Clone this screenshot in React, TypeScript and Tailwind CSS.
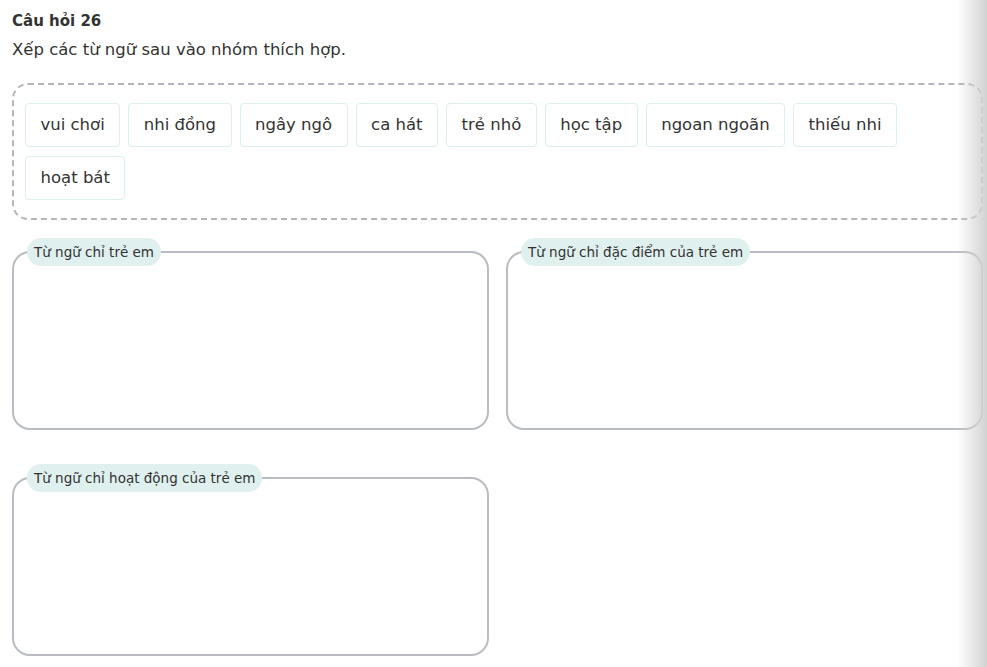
const words = [
  'vui chơi',
  'nhi đồng',
  'ngây ngô',
  'ca hát',
  'trẻ nhỏ',
  'học tập',
  'ngoan ngoãn',
  'thiếu nhi',
  'hoạt bát',
]

const groups = ['Từ ngữ chỉ trẻ em', 'Từ ngữ chỉ đặc điểm của trẻ em', 'Từ ngữ chỉ hoạt động của trẻ em']

function GroupBox({ label }: { label: string }) {
  return (
    <div className="relative pt-[13px]">
      <span className="absolute left-[15px] top-0 rounded-full bg-[#dff0ee] px-[7px] py-[6px] text-[13.5px] leading-[16px] text-[#333]">
        {label}
      </span>
      <div className="h-[179px] rounded-[18px] border-2 border-[#b9bcc1]" />
    </div>
  )
}

export default function App() {
  return (
    <div className="relative h-[667px] overflow-hidden bg-white pl-[12px] pr-[4px] pt-[11px] font-['DejaVu_Sans',sans-serif] text-[#333]">
      <h2 className="text-[15px] font-bold leading-[20px]">Câu hỏi 26</h2>
      <p className="mt-[9px] text-[16.5px] leading-[20px]">Xếp các từ ngữ sau vào nhóm thích hợp.</p>

      <div className="mt-[23px] flex flex-wrap gap-[9px_8px] rounded-[16px] border-2 border-dashed border-[#b4b5ba] px-[11px] pb-[18px] pt-[18px]">
        {words.map((w) => (
          <div
            key={w}
            className="flex h-[44px] items-center rounded-[4px] border border-[#dcefec] px-[14.5px] text-[16.5px] text-[#333]"
          >
            {w}
          </div>
        ))}
      </div>

      <div className="mt-[18px] grid grid-cols-2 gap-x-[17px] gap-y-[34px]">
        {groups.map((g) => (
          <GroupBox key={g} label={g} />
        ))}
      </div>

      <div className="pointer-events-none absolute right-0 top-0 h-full w-[30px] bg-gradient-to-r from-transparent to-[#d2d2d2]" />
    </div>
  )
}
